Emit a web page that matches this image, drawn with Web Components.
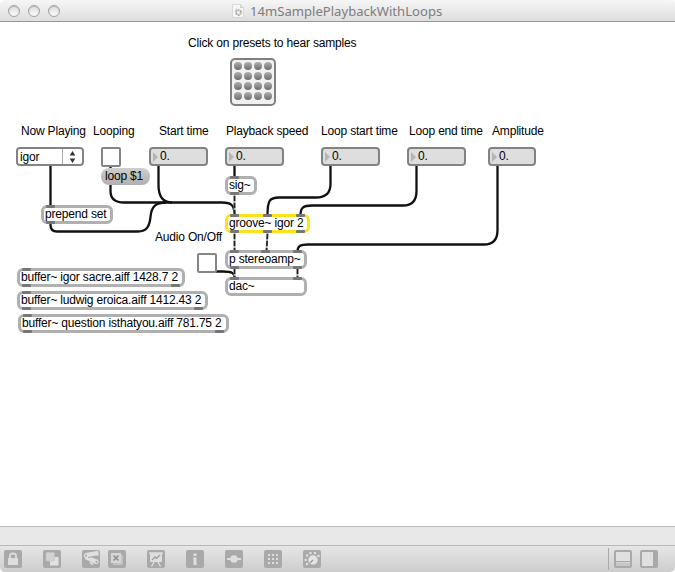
<!DOCTYPE html>
<html lang="en"><head><meta charset="utf-8"><title>14mSamplePlaybackWithLoops</title>
<style>
html,body{margin:0;height:100%;overflow:hidden;background:#fff}
body{font:12px/14px "Liberation Sans",Arial,sans-serif;letter-spacing:-.18px;color:#000}
</style></head><body>
<patcher-window></patcher-window>
<script>
const define=(name,html,setup)=>customElements.define(name,class extends HTMLElement{
  connectedCallback(){
    if(this.shadowRoot)return;
    const t=document.createElement('template');t.innerHTML=html;
    const r=this.attachShadow({mode:'open'});
    r.append(t.content.cloneNode(true));
    if(setup)setup(this,r);
  }
});
const place=(el)=>{for(const [a,p] of [['x','left'],['y','top'],['w','width'],['h','height']])
  if(el.hasAttribute(a))el.style[p]=el.getAttribute(a)+'px';};

define('title-bar',`<style>
:host{display:flex;height:21px;border-bottom:1px solid #979797;background:linear-gradient(#f6f6f6,#dedede);position:relative;align-items:center;border-top-left-radius:5px;border-top-right-radius:5px}
.lights{display:flex;gap:8px;padding-left:8px}
i{width:10px;height:10px;border:1px solid #a2a2a2;border-radius:50%;background:linear-gradient(#dedede,#fafafa);box-shadow:inset 0 1px 1px #bbb}
.title{display:flex;align-items:center;margin-left:172px;gap:6px;color:#7d7d7d;font:13.1px/20px "Noto Sans","Open Sans",sans-serif;white-space:nowrap;letter-spacing:0}
</style><div class="lights"><i></i><i></i><i></i></div>
<div class="title"><svg width="12" height="14" viewBox="0 0 12 14"><path d="M.5.5h8l3 3v10H.5z" fill="#f6f6f6" stroke="#d8d8d8"/><path d="M8.5.5v3h3" fill="none" stroke="#ccc"/><circle cx="6.500" cy="8.500" r="2.500" fill="#eee" stroke="#a4a4a4" stroke-width="1.700" stroke-dasharray="2 .6"/><path d="M3 8l1.500-3.500" stroke="#b5dce0" stroke-width="1.500"/><path d="M8 10.500l1.500-3" stroke="#e3bd98"/></svg><span><slot></slot></span></div>`);

define('patch-label',`<style>:host{position:absolute;white-space:nowrap;line-height:14px}</style><slot></slot>`,place);

define('patch-box',`<style>
:host{position:absolute;box-sizing:border-box;border:3px solid #b0b0b0;border-radius:6px;background:#fff;height:19px}
:host([selected]){border-color:#ffe11a}
span{display:block;white-space:nowrap;line-height:14px;margin:-1px 0 0 1px}
b{position:absolute;width:9px;height:3px;background:#777;border-radius:1px}
</style><span><slot></slot></span>`,(el,r)=>{place(el);
  for(const [k,edge] of [['ins','top'],['outs','bottom']])
    (el.getAttribute(k)||'').split(' ').filter(Boolean).forEach(v=>{
      const b=document.createElement('b');b.style.left=(v-3)+'px';b.style[edge]='-3px';r.append(b);});
});

define('patch-number',`<style>
:host{position:absolute;box-sizing:border-box;display:flex;align-items:center;border:2px solid #838383;border-radius:4px;background:#dedede;height:19px;padding-left:2px}
svg{margin-right:2px}span{line-height:15px;margin-top:-1px}
</style><svg width="5" height="10"><path d="M0 0L5 5L0 10z" fill="#b5b5b5"/></svg><span><slot></slot></span>`,place);

define('patch-toggle',`<style>:host{position:absolute;box-sizing:border-box;border:2px solid #858585;border-radius:2px;background:#fff}</style>`,place);

define('patch-message',`<style>:host{position:absolute;box-sizing:border-box;height:17px;border-radius:8px;background:linear-gradient(#cecece,#b0b0b0);padding:1px 0 0 4px;line-height:14px;white-space:nowrap}</style><slot></slot>`,place);

define('patch-menu',`<style>
:host{position:absolute;box-sizing:border-box;display:flex;border:2px solid #838383;border-radius:4px;background:#fff;height:19px}
span{flex:1;padding-left:2px;line-height:15px;margin-top:1px}div{width:19px;border-left:1px solid #aaa;display:grid;place-items:center}
</style><span><slot></slot></span><div><svg width="7" height="12"><path d="M3.500 0L6.300 4.500H.7zM3.500 12L6.300 7.500H.7z" fill="#333"/></svg></div>`,place);

define('patch-preset',`<style>
:host{position:absolute;box-sizing:border-box;border:2px solid #808080;border-radius:5px;background:#f1f1f1;display:grid;grid-template-columns:repeat(4,8px);grid-auto-rows:8px;gap:2px;padding:2px 0 0 2px}
i{border-radius:50%;background:linear-gradient(#b0b0b0,#6c6c6c)}
</style>${'<i></i>'.repeat(16)}`,place);

define('patch-cords',`<style>:host{position:absolute;inset:0}svg{display:block}.c{fill:none;stroke:#111;stroke-width:2.3}.s{fill:none;stroke:#aaa;stroke-width:2}.d{fill:none;stroke:#222;stroke-width:1.7;stroke-dasharray:5 2}</style>
<svg width="675" height="504" viewBox="0 22 675 504">
<g class="c"><path d="M50.500 165V207"/><path d="M50.500 222V225Q50.500 231.500 57 231.500H138C147 231.500 149.500 226 150.500 217C151.500 206 156 202.500 166 202.500"/>
<path d="M110.500 165V169M110.500 184V191C110.500 199 115 202.500 124 202.500H222C231 202.500 234.500 205 234.500 215"/>
<path d="M158.500 165V185C158.500 196 163 202.500 172 202.500"/><path d="M234.500 165V178"/>
<path d="M330.500 165V184C330.500 193 326 197.500 316 197.500H279C270 197.500 267.500 200 267.500 215"/>
<path d="M416.500 165V191C416.500 201 412 205.500 403 205.500H312C303 205.500 300.500 208 300.500 215"/>
<path d="M497.500 165V230C497.500 240 493 244.500 484 244.500H308C300 244.500 297.500 246 297.500 252"/>
<path d="M216 271.500H223C232 271.500 234.500 273 234.500 278"/></g>
<g class="s"><path d="M234.500 194V215M234.500 232V251M267.500 232L266.500 251M234.500 268V278M297.500 268V278"/></g>
<g class="d"><path d="M234.500 196V215"/><path d="M234.500 234V251"/><path d="M267.500 234L266.500 251"/><path d="M234.500 269V278"/><path d="M297.500 269V278"/></g>
</svg>`);

const icons={
lock:'<rect x="4" y="8" width="10" height="7" fill="#ddd"/><path d="M6 8V5.500Q6 3.500 9 3.500Q12 3.500 12 5.500V8" fill="none" stroke="#ddd" stroke-width="1.800"/>',
layers:'<rect x="7" y="7" width="8.500" height="8.500" fill="#e2e2e2"/><rect x="3" y="2.500" width="8.500" height="8.500" rx="1" fill="#d2d2d2" stroke="#c6c6c6" stroke-width=".6"/>',
scrolls:'<g stroke="#e0e0e0" stroke-width="4.500"><path d="M4 5.300L16.500 3"/><path d="M3.500 7L15 12"/></g><circle cx="4" cy="5.500" r="2.300" fill="#e0e0e0"/><circle cx="14.500" cy="11.800" r="2.300" fill="#e0e0e0"/><path d="M8 12L11 14.500" stroke="#d5d5d5" stroke-width="2.500"/><circle cx="4" cy="5.500" r="1.100" fill="#a9a9a9"/><circle cx="14.500" cy="11.800" r="1.100" fill="#a9a9a9"/><path d="M6 7.600L14 6" stroke="#a9a9a9"/>',
close:'<rect x="5" y="5" width="10" height="10" fill="#c2c2c2"/><rect x="3" y="3" width="10" height="10" fill="#d6d6d6"/><path d="M5.500 5.500l5 5M10.500 5.500l-5 5" stroke="#8e8e8e" stroke-width="1.600"/>',
chart:'<rect x="3" y="3" width="12" height="9" fill="#dedede"/><path d="M2 3H16M7 12L4.500 16.500M11 12L13.500 16.500" fill="none" stroke="#dedede" stroke-width="1.400"/><path d="M5 10L8 7L9.500 8.300L13 5" fill="none" stroke="#a0a0a0" stroke-width="1.300"/>',
info:'<path d="M7.500 3.500h3v2.500h-3zM7 7.500h3.500V15h-3V9H7z" fill="#e0e0e0"/>',
node:'<path d="M2 9H16" stroke="#ddd" stroke-width="2"/><circle cx="9" cy="9" r="3.800" fill="#ddd"/>',
grid:[4,8,12].flatMap(x=>[4,8,12].map(y=>`<rect x="${x}" y="${y}" width="2" height="2" fill="#ddd"/>`)).join(''),
dial:'<circle cx="10" cy="10" r="4.700" fill="#e3e3e3"/><path d="M7 13L10 10" stroke="#999" stroke-width="1.300"/>'+[[4,14],[2.7,10],[4,5.5],[7.5,3],[12,3],[15.500,6]].map(p=>`<circle cx="${p[0]}" cy="${p[1]}" r="1.250" fill="#e0e0e0"/>`).join('')};
define('tool-icon',`<style>:host{display:block;width:18px;height:18px}svg{display:block}</style>`,(el,r)=>{
  const n=el.getAttribute('name');
  const outline=n==='bottom'||n==='side';
  const art=outline?`<rect x="1" y="1" width="16" height="16" rx="1" fill="#e0e0e0" stroke="#a9a9a9" stroke-width="2"/>`+(n==='bottom'?'<path d="M2 12.500H16V16H2z" fill="#c6c6c6"/><path d="M2 11.500H16" stroke="#a9a9a9"/>':'<path d="M13 1H17V17H13z" fill="#a9a9a9"/>')
    :`<rect width="18" height="18" rx="2" fill="#a9a9a9"/>${icons[n]}`;
  r.innerHTML+=`<svg width="18" height="18" viewBox="0 0 18 18">${art}</svg>`;
});
define('tool-bar',`<style>
:host{display:flex;box-sizing:border-box;height:27px;border-top:1px solid #b8b8b8;background:linear-gradient(#e6e6e6,#cdcdcd);padding:4px 17px 0 4px;border-radius:0 0 5px 5px}
.l{display:flex;gap:21px;flex:1}.p{display:flex;gap:8px}.r{display:flex;gap:8px;padding-left:5px;border-left:1px solid #aaa;margin-top:-2px;padding-top:2px;height:20px}
</style><div class="l"><tool-icon name="lock"></tool-icon><tool-icon name="layers"></tool-icon><div class="p"><tool-icon name="scrolls"></tool-icon><tool-icon name="close"></tool-icon></div><tool-icon name="chart"></tool-icon><tool-icon name="info"></tool-icon><tool-icon name="node"></tool-icon><tool-icon name="grid"></tool-icon><tool-icon name="dial"></tool-icon></div>
<div class="r"><tool-icon name="bottom"></tool-icon><tool-icon name="side"></tool-icon></div>`);

define('patch-canvas',`<style>:host{display:block;position:relative;flex:1;overflow:hidden}.o{position:absolute;left:0;top:-22px}</style>
<patch-cords></patch-cords><div class="o">
<patch-label x="188" y="36">Click on presets to hear samples</patch-label>
<patch-preset x="230" y="58" w="46" h="48"></patch-preset>
<patch-label x="21" y="124">Now Playing</patch-label><patch-label x="93" y="124">Looping</patch-label><patch-label x="159" y="124">Start time</patch-label><patch-label x="226" y="124">Playback speed</patch-label><patch-label x="321" y="124">Loop start time</patch-label><patch-label x="409" y="124">Loop end time</patch-label><patch-label x="492" y="124">Amplitude</patch-label><patch-label x="155" y="230">Audio On/Off</patch-label>
<patch-menu x="16" y="147" w="68">igor</patch-menu>
<patch-toggle x="101" y="147" w="20" h="20"></patch-toggle>
<patch-number x="149" y="147" w="59">0.</patch-number><patch-number x="225" y="147" w="59">0.</patch-number><patch-number x="321" y="147" w="59">0.</patch-number><patch-number x="407" y="147" w="59">0.</patch-number><patch-number x="488" y="147" w="48">0.</patch-number>
<patch-message x="101" y="168" w="49">loop $1</patch-message>
<patch-box x="41" y="205" w="72" ins="5" outs="5">prepend set</patch-box>
<patch-box x="225" y="176" w="32" ins="5" outs="5">sig~</patch-box>
<patch-box x="225" y="214" w="85" ins="5 38 71" outs="5 38 71" selected>groove~ igor 2</patch-box>
<patch-box x="225" y="250" w="82" ins="5 36 68" outs="5 68">p stereoamp~</patch-box>
<patch-box x="225" y="277" w="82" ins="5 68">dac~</patch-box>
<patch-toggle x="197" y="253" w="20" h="20"></patch-toggle>
<patch-box x="17" y="268" w="168" ins="5" outs="5 154">buffer~ igor sacre.aiff 1428.7 2</patch-box>
<patch-box x="17" y="291" w="191" ins="5" outs="5 177">buffer~ ludwig eroica.aiff 1412.43 2</patch-box>
<patch-box x="18" y="314" w="211" ins="5" outs="5 197">buffer~ question isthatyou.aiff 781.75 2</patch-box>
</div>`);
define('patcher-window',`<style>:host{display:flex;flex-direction:column;width:675px;height:572px;background:#fff}.status{box-sizing:border-box;height:19px;border-top:1px solid #b8b8b8;background:#e8e8e8}</style>
<title-bar>14mSamplePlaybackWithLoops</title-bar><patch-canvas></patch-canvas><div class="status"></div><tool-bar></tool-bar>`);
</script></body></html>
